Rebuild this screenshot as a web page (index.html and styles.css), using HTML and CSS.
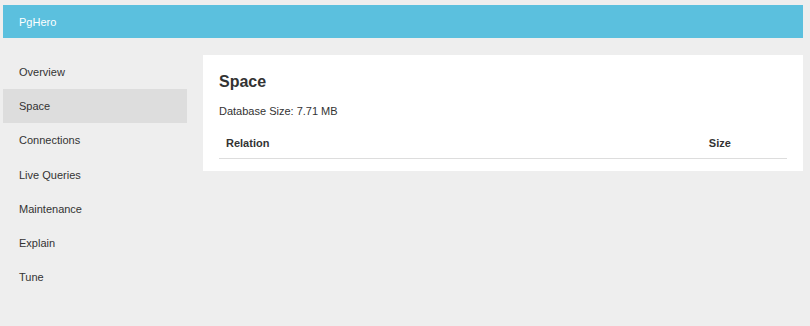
FILE: index.html
```html
<!DOCTYPE html>
<html lang="en">
<head>
    <meta charset="UTF-8">
    <meta name="viewport" content="width=device-width, initial-scale=1.0">
    <title>PgHero</title>
    <link rel="stylesheet" href="styles.css">
</head>
<body>

<div class="header">
    <span class="brand">PgHero</span>
</div>

<div class="layout">
    <div class="sidebar">
        <a class="nav-item" href="#">Overview</a>
        <a class="nav-item active" href="#">Space</a>
        <a class="nav-item" href="#">Connections</a>
        <a class="nav-item" href="#">Live Queries</a>
        <a class="nav-item" href="#">Maintenance</a>
        <a class="nav-item" href="#">Explain</a>
        <a class="nav-item" href="#">Tune</a>
    </div>

    <div class="content">
        <h1>Space</h1>
        <p>Database Size: 7.71 MB</p>
        <table>
            <tr>
                <th>Relation</th>
                <th class="size-col">Size</th>
            </tr>
        </table>
    </div>
</div>

</body>
</html>
```

FILE: styles.css
```css
body {
    font-family: "Liberation Sans", Arial, sans-serif;
    font-size: 11px;
    color: #333;
    background: #eee;
    margin: 5px 7px 0 3px;
}
.header {
    background: #5bc0de;
    height: 33px;
    display: flex;
    align-items: center;
    padding: 0 16px;
}
.brand {
    color: #fff;
    font-size: 11px;
}
.layout {
    display: flex;
    gap: 16px;
    margin-top: 17px;
    align-items: flex-start;
}
.sidebar {
    width: 184px;
    flex-shrink: 0;
    display: flex;
    flex-direction: column;
}
.nav-item {
    display: block;
    padding: 9.1px 16px;
    line-height: 16px;
    color: #333;
    text-decoration: none;
}
.nav-item.active {
    background: #ddd;
}
.content {
    flex: 1;
    background: #fff;
    padding: 16px 16px 12px;
}
h1 {
    font-size: 16px;
    line-height: 21px;
    margin: 0 0 11px;
}
p {
    margin: 0 0 10px;
    line-height: 16px;
}
table {
    width: 100%;
    border-collapse: collapse;
}
th {
    text-align: left;
    padding: 7px;
    line-height: 15px;
    border-bottom: 1px solid #ddd;
}
.size-col {
    width: 15%;
}
```
